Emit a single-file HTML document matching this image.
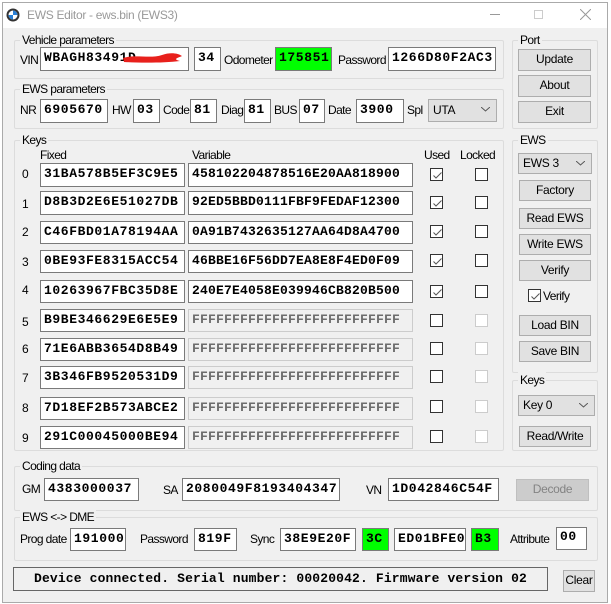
<!DOCTYPE html>
<html><head><meta charset="utf-8"><style>
*{box-sizing:border-box;margin:0;padding:0}
body{width:611px;height:604px;background:#fff;position:relative;overflow:hidden;font-family:"Liberation Sans",sans-serif;font-size:12px;color:#000}
.a{position:absolute}
.win{left:2px;top:2px;width:606px;height:601px;border:1px solid #aaa;background:#f0f0f0}
.tb{left:3px;top:3px;width:604px;height:25px;background:#fff}
.g{position:absolute;border:1px solid #dcdcdc;border-radius:2px}
.gl{position:absolute;background:#f0f0f0;padding:0 2px;font-size:12px;top:-9px;left:5px;line-height:16px;letter-spacing:-0.6px}
.l{position:absolute;font-size:12px;line-height:14px;color:#000;white-space:nowrap;letter-spacing:-0.6px}
.i{position:absolute;background:#fff;border:1px solid #7a7a7a;font-family:"Liberation Mono",monospace;font-weight:bold;font-size:13px;line-height:20px;padding-left:3px;letter-spacing:0.6px;white-space:nowrap;overflow:hidden}
.v{letter-spacing:0.2px}
.d{background:#f0f0f0;border-color:#ccc;color:#6d6d6d}
.gr{background:#00ff00}
.b{position:absolute;background:#e1e1e1;border:1px solid #adadad;text-align:center;font-size:12px;line-height:19px;letter-spacing:-0.3px}
.s{position:absolute;background:#e1e1e1;border:1px solid #adadad;font-size:12px;line-height:19px;padding-left:4px;letter-spacing:-0.3px}
.s svg{position:absolute;right:6px;top:7px}
.c{position:absolute;width:13px;height:13px;border:1px solid #333;background:#fff}
.c.dis{border-color:#ccc}
.c svg{position:absolute;left:1px;top:1px}
</style></head><body>
<div class="a win"></div>
<div class="a tb"></div>
<svg class="a" style="left:6px;top:8px" width="14" height="14" viewBox="0 0 14 14"><circle cx="7" cy="7" r="6.5" fill="#333"/><circle cx="7" cy="7" r="4.5" fill="#fff"/><path d="M7 2.5A4.5 4.5 0 0 1 11.5 7H7ZM7 11.5A4.5 4.5 0 0 1 2.5 7H7Z" fill="#2a7fd4"/></svg>
<div class="l" style="left:27px;top:8px;font-size:12px;color:#999;letter-spacing:-0.3px">EWS Editor - ews.bin (EWS3)</div>
<div class="a" style="left:490px;top:14px;width:10px;height:1px;background:#999"></div>
<div class="a" style="left:534px;top:10px;width:9px;height:9px;border:1px solid #ccc"></div>
<svg class="a" style="left:580px;top:9px" width="11" height="11"><path d="M0 0L11 11M11 0L0 11" stroke="#999" stroke-width="1"/></svg>

<div class="g" style="left:14px;top:40px;width:490px;height:39px"><div class="gl">Vehicle parameters</div></div>
<div class="l" style="left:20px;top:53px">VIN</div>
<div class="i" style="left:40px;top:47px;width:149px;height:24px">WBAGH83491D</div>
<svg class="a" style="left:120px;top:50px" width="65" height="16"><path d="M3 8C15 4 30 9 42 5C50 2 58 3 62 6C58 8 52 9 60 11C45 13 20 13 4 12Z" fill="#e8201c"/></svg>
<div class="i" style="left:194px;top:47px;width:27px;height:24px">34</div>
<div class="l" style="left:224px;top:53px">Odometer</div>
<div class="i gr" style="left:275px;top:47px;width:57px;height:24px">175851</div>
<div class="l" style="left:338px;top:53px">Password</div>
<div class="i" style="left:388px;top:47px;width:108px;height:24px">1266D80F2AC3</div>

<div class="g" style="left:14px;top:89px;width:490px;height:40px"><div class="gl">EWS parameters</div></div>
<div class="l" style="left:20px;top:103px">NR</div>
<div class="i" style="left:40px;top:99px;width:68px;height:24px">6905670</div>
<div class="l" style="left:112px;top:103px">HW</div>
<div class="i" style="left:133px;top:99px;width:27px;height:24px">03</div>
<div class="l" style="left:163px;top:103px">Code</div>
<div class="i" style="left:190px;top:99px;width:27px;height:24px">81</div>
<div class="l" style="left:221px;top:103px">Diag</div>
<div class="i" style="left:244px;top:99px;width:27px;height:24px">81</div>
<div class="l" style="left:274px;top:103px">BUS</div>
<div class="i" style="left:299px;top:99px;width:26px;height:24px">07</div>
<div class="l" style="left:328px;top:103px">Date</div>
<div class="i" style="left:356px;top:99px;width:48px;height:24px">3900</div>
<div class="l" style="left:407px;top:103px">Spl</div>
<div class="s" style="left:428px;top:99px;width:69px;height:23px;line-height:21px">UTA<svg width="9" height="5"><path d="M0 0L4.5 4L9 0" stroke="#555" fill="none"/></svg></div>

<div class="g" style="left:14px;top:140px;width:490px;height:311px"><div class="gl">Keys</div></div>
<div class="l" style="left:40px;top:148px">Fixed</div>
<div class="l" style="left:192px;top:148px">Variable</div>
<div class="l" style="left:424px;top:148px">Used</div>
<div class="l" style="left:460px;top:148px">Locked</div>

<div class="l" style="left:22px;top:167px">0</div><div class="i" style="left:40px;top:163px;width:145px;height:24px">31BA578B5EF3C9E5</div><div class="i v" style="left:188px;top:163px;width:225px;height:24px">458102204878516E20AA818900</div>
<div class="l" style="left:22px;top:197px">1</div><div class="i" style="left:40px;top:191px;width:145px;height:24px">D8B3D2E6E51027DB</div><div class="i v" style="left:188px;top:191px;width:225px;height:24px">92ED5BBD0111FBF9FEDAF12300</div>
<div class="l" style="left:22px;top:225px">2</div><div class="i" style="left:40px;top:221px;width:145px;height:23px">C46FBD01A78194AA</div><div class="i v" style="left:188px;top:221px;width:225px;height:23px">0A91B7432635127AA64D8A4700</div>
<div class="l" style="left:22px;top:255px">3</div><div class="i" style="left:40px;top:250px;width:145px;height:23px">0BE93FE8315ACC54</div><div class="i v" style="left:188px;top:250px;width:225px;height:23px">46BBE16F56DD7EA8E8F4ED0F09</div>
<div class="l" style="left:22px;top:283px">4</div><div class="i" style="left:40px;top:280px;width:145px;height:23px">10263967FBC35D8E</div><div class="i v" style="left:188px;top:280px;width:225px;height:23px">240E7E4058E039946CB820B500</div>
<div class="l" style="left:22px;top:315px">5</div><div class="i" style="left:40px;top:309px;width:145px;height:23px">B9BE346629E6E5E9</div><div class="i v d" style="left:188px;top:309px;width:225px;height:23px">FFFFFFFFFFFFFFFFFFFFFFFFFF</div>
<div class="l" style="left:22px;top:342px">6</div><div class="i" style="left:40px;top:338px;width:145px;height:23px">71E6ABB3654D8B49</div><div class="i v d" style="left:188px;top:338px;width:225px;height:23px">FFFFFFFFFFFFFFFFFFFFFFFFFF</div>
<div class="l" style="left:22px;top:371px">7</div><div class="i" style="left:40px;top:366px;width:145px;height:23px">3B346FB9520531D9</div><div class="i v d" style="left:188px;top:366px;width:225px;height:23px">FFFFFFFFFFFFFFFFFFFFFFFFFF</div>
<div class="l" style="left:22px;top:401px">8</div><div class="i" style="left:40px;top:397px;width:145px;height:23px">7D18EF2B573ABCE2</div><div class="i v d" style="left:188px;top:397px;width:225px;height:23px">FFFFFFFFFFFFFFFFFFFFFFFFFF</div>
<div class="l" style="left:22px;top:431px">9</div><div class="i" style="left:40px;top:426px;width:145px;height:23px">291C00045000BE94</div><div class="i v d" style="left:188px;top:426px;width:225px;height:23px">FFFFFFFFFFFFFFFFFFFFFFFFFF</div>

<div class="c" style="left:430px;top:168px"><svg width="11" height="11"><path d="M1.5 5.5L4 8L9.5 2.5" stroke="#555" fill="none"/></svg></div><div class="c" style="left:475px;top:168px"></div>
<div class="c" style="left:430px;top:196px"><svg width="11" height="11"><path d="M1.5 5.5L4 8L9.5 2.5" stroke="#555" fill="none"/></svg></div><div class="c" style="left:475px;top:196px"></div>
<div class="c" style="left:430px;top:225px"><svg width="11" height="11"><path d="M1.5 5.5L4 8L9.5 2.5" stroke="#555" fill="none"/></svg></div><div class="c" style="left:475px;top:225px"></div>
<div class="c" style="left:430px;top:254px"><svg width="11" height="11"><path d="M1.5 5.5L4 8L9.5 2.5" stroke="#555" fill="none"/></svg></div><div class="c" style="left:475px;top:254px"></div>
<div class="c" style="left:430px;top:285px"><svg width="11" height="11"><path d="M1.5 5.5L4 8L9.5 2.5" stroke="#555" fill="none"/></svg></div><div class="c" style="left:475px;top:285px"></div>
<div class="c" style="left:430px;top:314px"></div><div class="c dis" style="left:475px;top:314px"></div>
<div class="c" style="left:430px;top:342px"></div><div class="c dis" style="left:475px;top:342px"></div>
<div class="c" style="left:430px;top:370px"></div><div class="c dis" style="left:475px;top:370px"></div>
<div class="c" style="left:430px;top:400px"></div><div class="c dis" style="left:475px;top:400px"></div>
<div class="c" style="left:430px;top:430px"></div><div class="c dis" style="left:475px;top:430px"></div>

<div class="g" style="left:512px;top:40px;width:86px;height:89px"><div class="gl">Port</div></div>
<div class="b" style="left:518px;top:49px;width:73px;height:22px">Update</div>
<div class="b" style="left:518px;top:75px;width:73px;height:22px">About</div>
<div class="b" style="left:518px;top:101px;width:73px;height:22px">Exit</div>

<div class="g" style="left:512px;top:140px;width:86px;height:233px"><div class="gl">EWS</div></div>
<div class="s" style="left:518px;top:153px;width:74px;height:21px">EWS 3<svg width="9" height="5"><path d="M0 0L4.5 4L9 0" stroke="#555" fill="none"/></svg></div>
<div class="b" style="left:519px;top:180px;width:72px;height:21px">Factory</div>
<div class="b" style="left:519px;top:208px;width:72px;height:21px">Read EWS</div>
<div class="b" style="left:519px;top:234px;width:72px;height:21px">Write EWS</div>
<div class="b" style="left:519px;top:260px;width:72px;height:21px">Verify</div>
<div class="c" style="left:528px;top:289px"><svg width="11" height="11"><path d="M1.5 5.5L4 8L9.5 2.5" stroke="#555" fill="none"/></svg></div>
<div class="l" style="left:543px;top:289px">Verify</div>
<div class="b" style="left:519px;top:315px;width:72px;height:21px">Load BIN</div>
<div class="b" style="left:519px;top:341px;width:72px;height:21px">Save BIN</div>

<div class="g" style="left:512px;top:380px;width:86px;height:71px"><div class="gl">Keys</div></div>
<div class="s" style="left:518px;top:395px;width:77px;height:21px">Key 0<svg width="9" height="5"><path d="M0 0L4.5 4L9 0" stroke="#555" fill="none"/></svg></div>
<div class="b" style="left:519px;top:426px;width:72px;height:21px">Read/Write</div>

<div class="g" style="left:14px;top:466px;width:584px;height:45px"><div class="gl">Coding data</div></div>
<div class="l" style="left:22px;top:482px">GM</div>
<div class="i" style="left:44px;top:478px;width:95px;height:23px">4383000037</div>
<div class="l" style="left:163px;top:483px">SA</div>
<div class="i" style="left:182px;top:478px;width:158px;height:23px">2080049F8193404347</div>
<div class="l" style="left:366px;top:483px">VN</div>
<div class="i" style="left:388px;top:478px;width:111px;height:23px">1D042846C54F</div>
<div class="b" style="left:516px;top:479px;width:73px;height:22px;background:#ccc;border-color:#bfbfbf;color:#838383">Decode</div>

<div class="g" style="left:14px;top:517px;width:584px;height:44px"><div class="gl">EWS &lt;-&gt; DME</div></div>
<div class="l" style="left:20px;top:532px">Prog date</div>
<div class="i" style="left:70px;top:528px;width:56px;height:23px">191000</div>
<div class="l" style="left:140px;top:532px">Password</div>
<div class="i" style="left:194px;top:528px;width:43px;height:23px">819F</div>
<div class="l" style="left:250px;top:532px">Sync</div>
<div class="i" style="left:280px;top:528px;width:76px;height:23px">38E9E20F</div>
<div class="i gr" style="left:362px;top:528px;width:27px;height:23px">3C</div>
<div class="i" style="left:394px;top:528px;width:72px;height:23px">ED01BFE0</div>
<div class="i gr" style="left:471px;top:528px;width:28px;height:23px">B3</div>
<div class="l" style="left:510px;top:532px">Attribute</div>
<div class="i" style="left:556px;top:527px;width:31px;height:23px;line-height:18px">00</div>

<div class="i" style="left:13px;top:567px;width:535px;height:24px;background:#f0f0f0;border-color:#666;text-align:center;padding-left:0;letter-spacing:0.15px;line-height:22px">Device connected. Serial number: 00020042. Firmware version 02</div>
<div class="b" style="left:563px;top:570px;width:32px;height:22px">Clear</div>
</body></html>
